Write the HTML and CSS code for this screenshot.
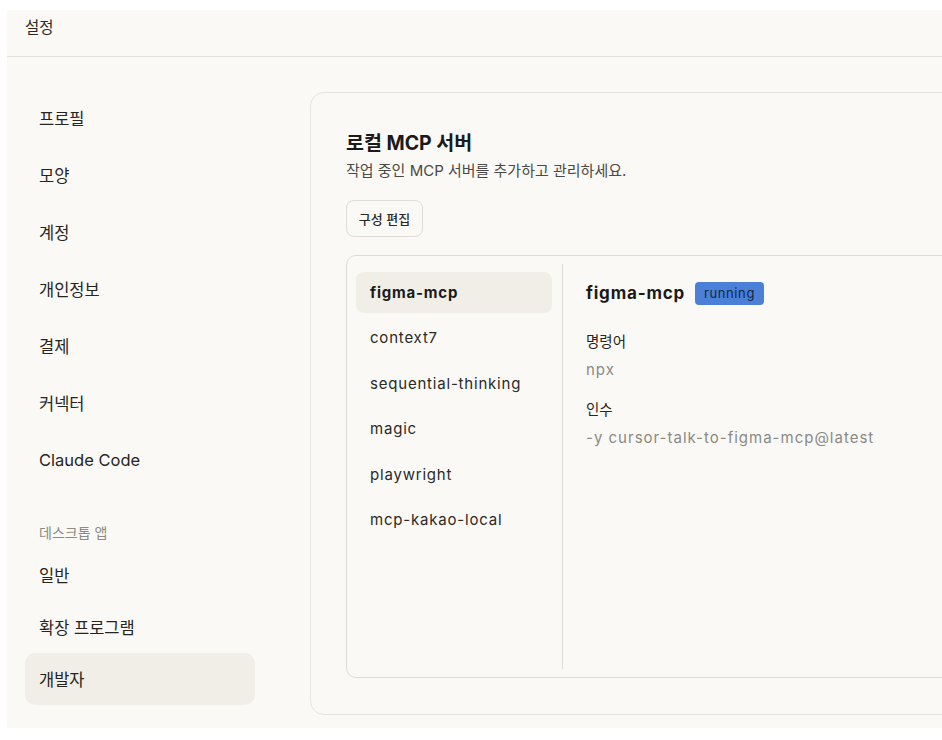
FILE: index.html
```html
<!DOCTYPE html>
<html lang="ko">
<head>
<meta charset="utf-8">
<title>설정</title>
<link rel="stylesheet" href="styles.css">
</head>
<body>
<div class="window">
  <header class="topbar">설정</header>
  <div class="layout">
    <nav class="sidebar">
      <div class="group first">
        <a class="nav-item">프로필</a>
        <a class="nav-item">모양</a>
        <a class="nav-item">계정</a>
        <a class="nav-item">개인정보</a>
        <a class="nav-item">결제</a>
        <a class="nav-item">커넥터</a>
        <a class="nav-item">Claude Code</a>
      </div>
      <div class="group-label">데스크톱 앱</div>
      <div class="group">
        <a class="nav-item">일반</a>
        <a class="nav-item">확장 프로그램</a>
        <a class="nav-item active">개발자</a>
      </div>
    </nav>
    <main class="content">
      <section class="card">
        <h1 class="card-title">로컬 MCP 서버</h1>
        <p class="card-desc">작업 중인 MCP 서버를 추가하고 관리하세요.</p>
        <button class="btn">구성 편집</button>
        <div class="servers">
          <ul class="server-list">
            <li class="server selected">figma-mcp</li>
            <li class="server">context7</li>
            <li class="server">sequential-thinking</li>
            <li class="server">magic</li>
            <li class="server">playwright</li>
            <li class="server">mcp-kakao-local</li>
          </ul>
          <div class="detail">
            <div class="detail-head">
              <span class="detail-name">figma-mcp</span>
              <span class="badge">running</span>
            </div>
            <div class="field">
              <div class="field-label">명령어</div>
              <div class="field-value">npx</div>
            </div>
            <div class="field">
              <div class="field-label">인수</div>
              <div class="field-value">-y cursor-talk-to-figma-mcp@latest</div>
            </div>
          </div>
        </div>
      </section>
    </main>
  </div>
</div>
</body>
</html>
```

FILE: styles.css
```css
* { box-sizing: border-box; }

html, body {
  margin: 0;
  padding: 0;
  background: #ffffff;
  overflow: hidden;
}

body {
  font-family: Inter, "Noto Sans CJK KR", sans-serif;
  color: #1f1e1c;
}

.window {
  margin: 10px 0 0 7px;
  width: 935px;
  height: 718px;
  background: #faf9f6;
  overflow: hidden;
  display: flex;
  flex-direction: column;
}

.topbar {
  height: 47px;
  flex: none;
  padding: 8px 18px 0;
  line-height: 20px;
  font-size: 15.5px;
  color: #2a2926;
  border-bottom: 1px solid #e4e2dc;
}

.layout {
  display: flex;
  flex: 1;
  min-height: 0;
}

.sidebar {
  width: 248px;
  flex: none;
  padding: 35px 0 0 18px;
}

.group {
  display: flex;
  flex-direction: column;
}

.group.first {
  gap: 5px;
}

.nav-item {
  display: flex;
  align-items: center;
  width: 230px;
  height: 52px;
  padding: 0 14px;
  border-radius: 10px;
  font-size: 16.5px;
  color: #262522;
}

.nav-item.active {
  background: #f0eee7;
}

.group-label {
  margin: 37px 0 6px 14px;
  height: 20px;
  line-height: 20px;
  font-size: 14px;
  color: #8d8b85;
}

.content {
  flex: 1;
  padding: 35px 0 0 55px;
  min-width: 0;
}

.card {
  width: 720px;
  height: 623px;
  border: 1px solid #e6e4de;
  border-radius: 14px;
  padding: 37px 0 36px 35px;
  display: flex;
  flex-direction: column;
}

.card-title {
  margin: 0;
  font-size: 19.5px;
  line-height: 26px;
  font-weight: 700;
  color: #1b1a18;
}

.card-desc {
  margin: 5px 0 0;
  font-size: 15px;
  line-height: 20px;
  color: #4a4945;
}

.btn {
  align-self: flex-start;
  margin-top: 19px;
  width: 77px;
  height: 37px;
  border: 1px solid #dfddd6;
  border-radius: 8px;
  background: #faf9f6;
  font-family: inherit;
  font-size: 13px;
  font-weight: 500;
  color: #2a2926;
}

.servers {
  margin-top: 18px;
  flex: 1;
  border: 1px solid #dedcd5;
  border-radius: 10px;
  padding: 8px 0 8px 9px;
  display: flex;
}

.server-list {
  list-style: none;
  margin: 0;
  padding: 8px 10px 0 0;
  width: 207px;
  flex: none;
  border-right: 1px solid #dedcd5;
  display: flex;
  flex-direction: column;
  gap: 4.4px;
}

.server {
  height: 41px;
  display: flex;
  align-items: center;
  padding: 0 14px;
  border-radius: 8px;
  font-size: 15px;
  letter-spacing: 0.8px;
  color: #2a2926;
}

.server.selected {
  background: #f0eee7;
  font-weight: 700;
  color: #1b1a18;
}

.detail {
  padding: 15px 0 0 23px;
  flex: 1;
}

.detail-head {
  height: 28px;
  display: flex;
  align-items: center;
  gap: 10px;
}

.detail-name {
  font-size: 17px;
  font-weight: 700;
  letter-spacing: 0.8px;
  color: #1b1a18;
}

.badge {
  height: 23px;
  padding: 0 9px;
  display: inline-flex;
  align-items: center;
  border-radius: 4px;
  background: #4a80d8;
  color: #142640;
  font-size: 13px;
  letter-spacing: 0.6px;
}

.field {
  margin-top: 24px;
}

.field + .field {
  margin-top: 18px;
}

.field-label {
  height: 22px;
  line-height: 22px;
  font-size: 14.5px;
  color: #262522;
}

.field-value {
  margin-top: 6px;
  height: 22px;
  line-height: 22px;
  font-size: 15px;
  letter-spacing: 1px;
  color: #8b8984;
}
```
